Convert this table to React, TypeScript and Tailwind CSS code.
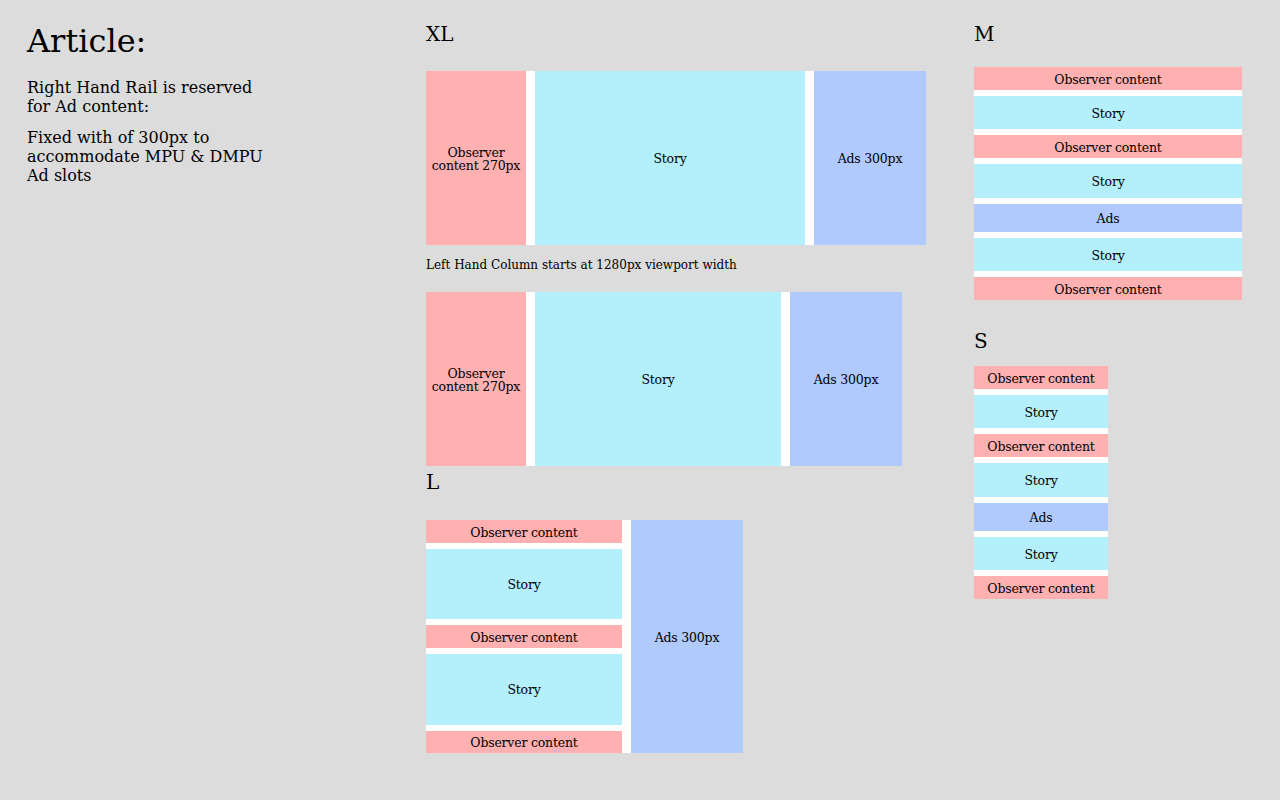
const serif = "font-['DejaVu_Serif',serif]";

const Box = ({ kind, className = "", children }: { kind: "obs" | "story" | "ads"; className?: string; children: React.ReactNode }) => {
    const bg = kind === "obs" ? "bg-[#ffb0b0]" : kind === "story" ? "bg-[#b4effc]" : "bg-[#b1cafd]";
    return (
        <div className={`${bg} flex items-center justify-center text-center pt-[3px] text-[12.5px] leading-[12.5px] tracking-[-0.2px] ${className}`}>
            {children}
        </div>
    );
};

const Stack = ({ width }: { width: string }) => (
    <div className={`${width} h-[233px] bg-white flex flex-col gap-[6px]`}>
        <Box kind="obs" className="h-[22.5px] shrink-0">Observer content</Box>
        <Box kind="story" className="flex-1">Story</Box>
        <Box kind="obs" className="h-[22.5px] shrink-0">Observer content</Box>
        <Box kind="story" className="flex-1">Story</Box>
        <Box kind="ads" className="h-[28px] shrink-0">Ads</Box>
        <Box kind="story" className="flex-1">Story</Box>
        <Box kind="obs" className="h-[22.5px] shrink-0">Observer content</Box>
    </div>
);

const Wide = ({ storyWidth }: { storyWidth: string }) => (
    <div className="h-[174px] w-fit bg-white flex gap-[9px]">
        <Box kind="obs" className="w-[100px]">
            Observer content 270px
        </Box>
        <Box kind="story" className={storyWidth}>Story</Box>
        <Box kind="ads" className="w-[112px]">Ads 300px</Box>
    </div>
);

const Heading = ({ children, className = "" }: { children: React.ReactNode; className?: string }) => (
    <h2 className={`text-[20px] leading-[24px] ${className}`}>{children}</h2>
);

export default function App() {
    return (
        <div className={`min-h-[800px] w-full bg-[#dcdcdc] text-black ${serif} flex px-[27px] pt-[22px]`}>
            {/* Intro */}
            <div className="w-[399px] shrink-0">
                <h1 className="text-[32px] leading-[38px]">Article:</h1>
                <div className="w-[246px] text-[16px] leading-[19px]">
                    <p className="mt-[18px]">Right Hand Rail is reserved for Ad content:</p>
                    <p className="mt-[12px]">Fixed with of 300px to accommodate MPU &amp; DMPU Ad slots</p>
                </div>
            </div>

            {/* XL + L */}
            <div className="w-[548px] shrink-0 flex flex-col">
                <Heading>XL</Heading>
                <div className="mt-[25px]">
                    <Wide storyWidth="w-[270px]" />
                </div>
                <p className="mt-[12px] text-[12px] leading-[16px]">
                    Left Hand Column starts at 1280px viewport width
                </p>
                <div className="mt-[19px]">
                    <Wide storyWidth="w-[246px]" />
                </div>
                <Heading className="mt-[4px]">L</Heading>
                <div className="mt-[26px] h-[233px] w-fit bg-white flex gap-[9px]">
                    <div className="w-[196px] flex flex-col gap-[6px]">
                        <Box kind="obs" className="h-[22.5px] shrink-0">Observer content</Box>
                        <Box kind="story" className="flex-1">Story</Box>
                        <Box kind="obs" className="h-[22.5px] shrink-0">Observer content</Box>
                        <Box kind="story" className="flex-1">Story</Box>
                        <Box kind="obs" className="h-[22.5px] shrink-0">Observer content</Box>
                    </div>
                    <Box kind="ads" className="w-[112px]">Ads 300px</Box>
                </div>
            </div>

            {/* M + S */}
            <div className="flex flex-col">
                <Heading>M</Heading>
                <div className="mt-[21px]">
                    <Stack width="w-[268px]" />
                </div>
                <Heading className="mt-[29px]">S</Heading>
                <div className="mt-[13px]">
                    <Stack width="w-[134px]" />
                </div>
            </div>
        </div>
    );
}
